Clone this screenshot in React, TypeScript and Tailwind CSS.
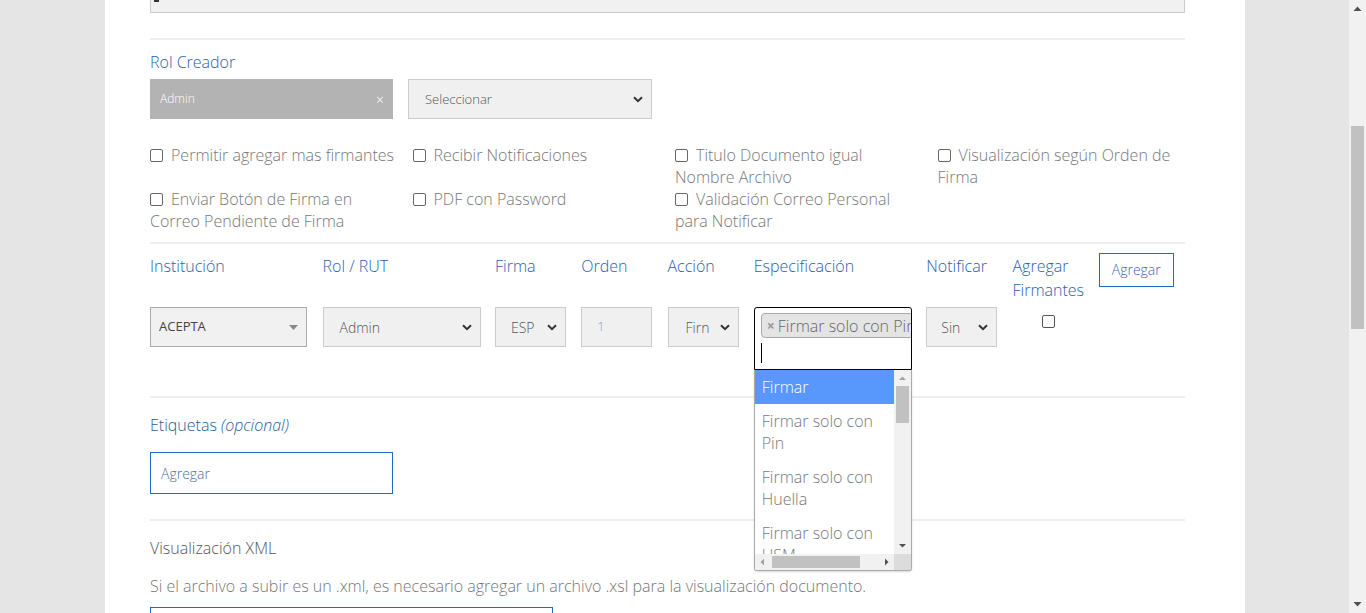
import React from "react";

function Chevron() {
  return (
    <svg width="10" height="7" viewBox="0 0 10 7" className="shrink-0">
      <path d="M1 1.2 L5 5.2 L9 1.2" fill="none" stroke="#333" strokeWidth="2" />
    </svg>
  );
}

function Check() {
  return (
    <span className="mr-[8px] inline-block h-[13px] w-[13px] rounded-[2px] border border-[#666] bg-white align-[-1px]" />
  );
}

function FakeSelect({ label, width, pad = "pl-[16px]", text = "text-[14px]" }: { label: string; width: string; pad?: string; text?: string }) {
  return (
    <div className={`flex h-[40px] items-center justify-between overflow-hidden border border-[#ccc] bg-[#f0f0f0] pr-[8px] ${pad} ${width}`}>
      <span className={`${text} whitespace-nowrap text-[#555]`}>{label}</span>
      <Chevron />
    </div>
  );
}

function Hr({ className = "" }: { className?: string }) {
  return <div className={`h-[2px] w-full bg-[#eeeeee] ${className}`} />;
}

function PageScrollbar() {
  return (
    <div className="relative h-[613px] w-[17px] shrink-0 bg-[#f1f1f1]">
      <svg width="17" height="17" viewBox="0 0 17 17" className="absolute left-0 top-0">
        <path d="M4.5 11 L8.5 6.5 L12.5 11 Z" fill="#505050" />
      </svg>
      <div className="absolute left-[2px] top-[126px] h-[203px] w-[13px] bg-[#c1c1c1]" />
      <svg width="17" height="17" viewBox="0 0 17 17" className="absolute bottom-0 left-0">
        <path d="M4.5 6 L8.5 10.5 L12.5 6 Z" fill="#505050" />
      </svg>
    </div>
  );
}

function Dropdown() {
  return (
    <div className="absolute left-0 top-[63px] z-10 flex h-[201px] w-[158px] flex-col overflow-hidden rounded-b-[3px] border border-t-0 border-[#aaa] bg-white shadow-[0_1px_2px_rgba(0,0,0,0.15)]">
      <div className="flex min-h-0 flex-1">
        <div className="flex-1 overflow-hidden text-[16px] leading-[22px] text-[#777]">
          <div className="bg-[#5897fb] px-[7px] py-[6px] text-white">Firmar</div>
          <div className="px-[7px] py-[6px]">
            Firmar solo con
            <br />
            Pin
          </div>
          <div className="px-[7px] py-[6px]">
            Firmar solo con
            <br />
            Huella
          </div>
          <div className="px-[7px] py-[6px]">
            Firmar solo con
            <br />
            USM
          </div>
        </div>
        <div className="relative w-[17px] shrink-0 bg-[#f1f1f1]">
          <svg width="17" height="15" viewBox="0 0 17 15" className="absolute left-0 top-0">
            <path d="M5 10 L8.5 6.5 L12 10 Z" fill="#a3a3a3" />
          </svg>
          <div className="absolute left-[2px] top-[16px] h-[37px] w-[13px] bg-[#c1c1c1]" />
          <svg width="17" height="15" viewBox="0 0 17 15" className="absolute bottom-0 left-0">
            <path d="M5 5 L8.5 8.5 L12 5 Z" fill="#505050" />
          </svg>
        </div>
      </div>
      <div className="flex h-[16px] shrink-0">
        <div className="relative flex-1 bg-[#f1f1f1]">
          <svg width="15" height="16" viewBox="0 0 15 16" className="absolute left-0 top-0">
            <path d="M9 4.5 L5.5 8 L9 11.5 Z" fill="#a3a3a3" />
          </svg>
          <div className="absolute left-[17px] top-[2px] h-[12px] w-[88px] bg-[#c1c1c1]" />
          <svg width="15" height="16" viewBox="0 0 15 16" className="absolute right-0 top-0">
            <path d="M6 4.5 L9.5 8 L6 11.5 Z" fill="#505050" />
          </svg>
        </div>
        <div className="w-[17px] bg-[#dcdcdc]" />
      </div>
    </div>
  );
}

export default function App() {
  const options = [
    { col: 0, label: "Permitir agregar mas firmantes" },
    { col: 1, label: "Recibir Notificaciones" },
    { col: 2, label: "Titulo Documento igual Nombre Archivo" },
    { col: 3, label: "Visualización según Orden de Firma" },
    { col: 0, label: "Enviar Botón de Firma en Correo Pendiente de Firma" },
    { col: 1, label: "PDF con Password" },
    { col: 2, label: "Validación Correo Personal para Notificar" },
  ];

  return (
    <div className="flex h-[613px] w-[1366px] overflow-hidden bg-[#e5e5e5] font-['Open_Sans',sans-serif] font-light">
      <div className="flex-1">
        <div className="ml-[105px] h-[613px] w-[1140px] bg-white pl-[45px]">
          <div className="w-[1035px]">
            {/* input cut off at the top */}
            <div className="relative h-[13px] border border-t-0 border-[#ccc] bg-[#f1f1f1]">
              <span className="absolute left-[3px] top-0 h-[2px] w-[5px] bg-[#333]" />
            </div>

            <Hr className="mt-[25px]" />

            {/* Rol creador */}
            <p className="mt-[11px] text-[16px] leading-[22px] text-[#2a62ad]">Rol Creador</p>
            <div className="mt-[6px] flex">
              <div className="flex h-[40px] w-[243px] items-center justify-between bg-[#b3b3b3] pl-[10px] pr-[9px] text-[12px] text-white">
                <span>Admin</span>
                <span className="text-[14px]">×</span>
              </div>
              <div className="ml-[15px]">
                <FakeSelect label="Seleccionar" width="w-[244px]" pad="pl-[16px]" text="text-[13px] pt-[2px]" />
              </div>
            </div>

            {/* opciones */}
            <div className="mt-[25px] grid w-[1050px] grid-cols-4 gap-x-[15px] pr-[15px] text-[16px] leading-[22px] text-[#777]">
              {options.map((o) => (
                <div key={o.label}>
                  <Check />
                  {o.label}
                </div>
              ))}
            </div>

            <Hr className="mt-[10px]" />

            {/* firmantes cabecera */}
            <div className="mt-[10px] grid grid-cols-12 text-[16px] leading-[24px] text-[#2a62ad]">
              <div className="col-span-2">Institución</div>
              <div className="col-span-2">Rol / RUT</div>
              <div>Firma</div>
              <div>Orden</div>
              <div>Acción</div>
              <div className="col-span-2">Especificación</div>
              <div>Notificar</div>
              <div className="pr-[4px]">Agregar Firmantes</div>
              <div>
                <button className="-mt-[1px] flex h-[34px] w-[75px] items-center justify-center border border-[#1d6cc6] bg-white text-[14px] font-light text-[#3a6bb0]">
                  Agregar
                </button>
              </div>
            </div>

            {/* firmantes controles */}
            <div className="mt-[5px] grid grid-cols-12 items-start">
              <div className="col-span-2">
                <div className="flex h-[40px] w-[157px] items-center justify-between border border-[#aaa] bg-[#f1f1f1] pl-[8px] pr-[8px]">
                  <span className="text-[13px] font-normal text-[#444]">ACEPTA</span>
                  <svg width="9" height="5" viewBox="0 0 9 5">
                    <path d="M0 0 L9 0 L4.5 5 Z" fill="#888" />
                  </svg>
                </div>
              </div>
              <div className="col-span-2">
                <FakeSelect label="Admin" width="w-[158px]" />
              </div>
              <div>
                <FakeSelect label="ESP" width="w-[71px]" pad="pl-[15px]" />
              </div>
              <div>
                <div className="flex h-[40px] w-[71px] items-center border border-[#ccc] bg-[#f0f0f0] pl-[15px] text-[13px] text-[#8aa0c0]">
                  1
                </div>
              </div>
              <div>
                <FakeSelect label="Firn" width="w-[71px]" pad="pl-[17px]" />
              </div>
              <div className="relative col-span-2">
                <div className="h-[63px] w-[158px] overflow-hidden rounded-t-[3px] border border-black bg-white pl-[6px] pt-[5px]">
                  <div className="flex h-[25px] w-[180px] items-center whitespace-nowrap rounded-[4px] border border-[#aaa] bg-[#e4e4e4] pl-[5px] text-[16px] leading-[20px] text-[#666]">
                    <span className="mr-[3px] text-[14px] font-bold text-[#999]">×</span>
                    Firmar solo con Pin
                  </div>
                  <div className="mt-[5px] h-[20px] w-[1px] bg-black" />
                </div>
                <Dropdown />
              </div>
              <div>
                <FakeSelect label="Sin" width="w-[71px]" pad="pl-[14px]" />
              </div>
              <div className="flex pl-[29px] pt-[8px]">
                <span className="inline-block h-[13px] w-[13px] rounded-[2px] border border-[#555] bg-white" />
              </div>
              <div />
            </div>

            <Hr className="mt-[26px]" />

            {/* etiquetas */}
            <p className="mt-[16px] text-[16px] leading-[22px] text-[#245f9f]">
              Etiquetas <span className="italic">(opcional)</span>
            </p>
            <div className="mt-[16px] flex h-[42px] w-[243px] items-center border border-[#1d6cc6] pl-[10px] text-[14px] text-[#4a6fa8]">
              Agregar
            </div>

            <Hr className="mt-[25px]" />

            {/* xml */}
            <p className="mt-[16px] text-[16px] leading-[22px] text-[#555]">Visualización XML</p>
            <p className="mt-[16px] text-[16px] leading-[22px] text-[#777]">
              Si el archivo a subir es un .xml, es necesario agregar un archivo .xsl para la visualización documento.
            </p>
            <div className="mt-[10px] h-[40px] w-[403px] border border-[#1d6cc6]" />
          </div>
        </div>
      </div>
      <PageScrollbar />
    </div>
  );
}
